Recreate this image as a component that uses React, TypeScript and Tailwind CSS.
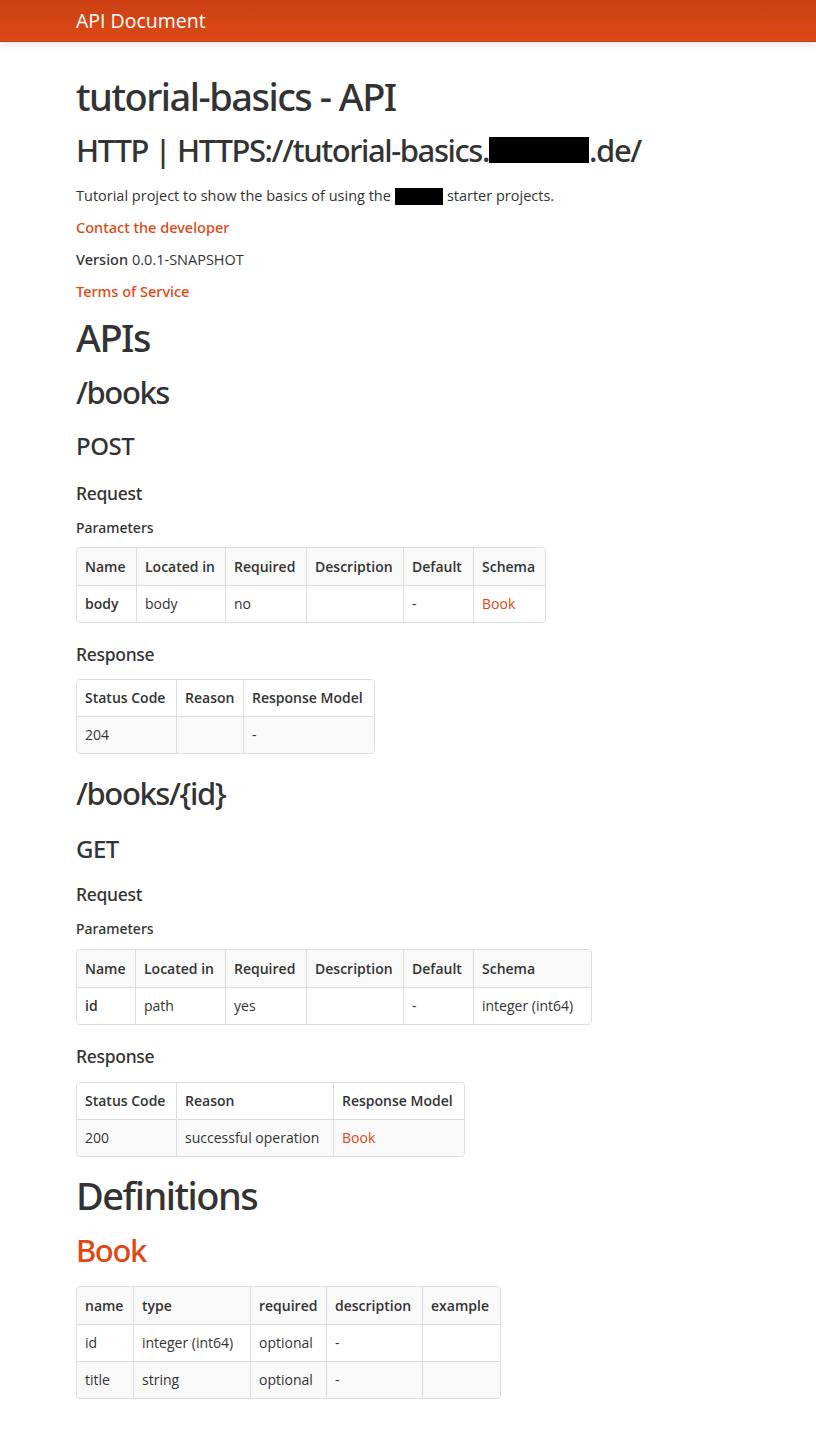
import React from 'react';

type Cell = { text: string; bold?: boolean; link?: boolean };

interface TableProps {
    widths: number[];
    head: string[];
    rows: Cell[][];
    // which rows (0 = head) get the grey background
    shaded: number[];
    rowH?: string;
}

function DocTable({ widths, head, rows, shaded, rowH = 'h-[37px]' }: TableProps) {
    const all: Cell[][] = [head.map((h) => ({ text: h, bold: true })), ...rows];
    return (
        <table className="border-separate border-spacing-0 border border-[#ddd] rounded-[4px] text-[14px] leading-[20px] text-[#333] table-fixed">
            <colgroup>
                {widths.map((w, i) => (
                    <col key={i} style={{ width: w }} />
                ))}
            </colgroup>
            <tbody>
                {all.map((row, r) => (
                    <tr key={r} className={shaded.includes(r) ? 'bg-[#f9f9f9]' : 'bg-white'}>
                        {row.map((c, i) => (
                            <td
                                key={i}
                                className={`px-2 py-2 ${rowH} whitespace-nowrap align-middle border-[#ddd] ${
                                    i > 0 ? 'border-l' : ''
                                } ${r > 0 ? 'border-t' : ''} ${c.bold ? 'font-semibold' : ''} ${
                                    c.link ? 'text-[#dd4814]' : ''
                                } ${r === 0 && i === 0 ? 'rounded-tl-[4px]' : ''} ${
                                    r === 0 && i === row.length - 1 ? 'rounded-tr-[4px]' : ''
                                } ${r === all.length - 1 && i === 0 ? 'rounded-bl-[4px]' : ''} ${
                                    r === all.length - 1 && i === row.length - 1 ? 'rounded-br-[4px]' : ''
                                }`}
                            >
                                {c.text}
                            </td>
                        ))}
                    </tr>
                ))}
            </tbody>
        </table>
    );
}

const head = "font-['Noto_Sans',sans-serif] font-medium";
const h1 = `${head} text-[38px] leading-[40px] tracking-[-1.5px]`;
const h2 = `${head} text-[31px] leading-[40px] tracking-[-1.4px]`;
const h3 = `${head} text-[24px] leading-[40px] tracking-[-0.5px]`;
const h4 = `${head} text-[17.5px] leading-[20px] tracking-[-0.3px]`;
const h5 = `${head} text-[14px] leading-[20px]`;
const para = 'h-[20px] text-[14.5px] leading-[20px] flex';

export default function App() {
    return (
        <div className="min-h-[1431px] bg-white text-[#333] font-['Open_Sans',sans-serif]">
            {/* Navbar */}
            <div className="h-[42px] bg-gradient-to-b from-[#cc4114] to-[#dd4814] border-b border-[#bf3e11] shadow-[0_2px_8px_rgba(0,0,0,0.12)] flex items-center px-[76px]">
                <span className="text-white text-[19.5px] leading-[20px]">API Document</span>
            </div>

            <div className="px-[76px] pb-[30px]">
                <h1 className={`mt-[34px] ${h1}`}>tutorial-basics - API</h1>
                <h2 className={`mt-[14px] ${h2} flex items-center`}>
                    HTTP | HTTPS://tutorial-basics.
                    <span className="inline-block w-[100px] h-[26px] bg-black" />
                    .de/
                </h2>
                <p className={`mt-[16px] ${para} items-center`}>
                    Tutorial project to show the basics of using the
                    <span className="inline-block w-[48px] h-[17px] bg-black mx-[4px]" />
                    starter projects.
                </p>
                <p className={`mt-[11px] ${para} items-center`}>
                    <a className={`text-[#dd4814] ${head}`}>Contact the developer</a>
                </p>
                <p className={`mt-[12px] ${para} items-baseline gap-[4px]`}>
                    <b className={head}>Version</b> 0.0.1-SNAPSHOT
                </p>
                <p className={`mt-[12px] ${para} items-center`}>
                    <a className={`text-[#dd4814] ${head}`}>Terms of Service</a>
                </p>

                <h1 className={`mt-[16px] ${h1}`}>APIs</h1>

                {/* /books */}
                <h2 className={`mt-[15px] ${h2}`}>/books</h2>
                <h3 className={`mt-[14px] ${h3}`}>POST</h3>
                <h4 className={`mt-[17px] ${h4}`}>Request</h4>
                <h5 className={`mt-[15px] ${h5}`}>Parameters</h5>
                <div className="mt-[9px]">
                    <DocTable
                        widths={[59, 89, 81, 97, 70, 72]}
                        head={['Name', 'Located in', 'Required', 'Description', 'Default', 'Schema']}
                        rows={[
                            [
                                { text: 'body', bold: true },
                                { text: 'body' },
                                { text: 'no' },
                                { text: '' },
                                { text: '-' },
                                { text: 'Book', link: true },
                            ],
                        ]}
                        shaded={[0]}
                    />
                </div>
                <h4 className={`mt-[21px] ${h4}`}>Response</h4>
                <div className="mt-[15px]">
                    <DocTable
                        widths={[99, 67, 131]}
                        head={['Status Code', 'Reason', 'Response Model']}
                        rows={[[{ text: '204' }, { text: '' }, { text: '-' }]]}
                        shaded={[1]}
                        rowH="h-[36px]"
                    />
                </div>

                {/* /books/{id} */}
                <h2 className={`mt-[19px] ${h2}`}>/books/{'{id}'}</h2>
                <h3 className={`mt-[16px] ${h3}`}>GET</h3>
                <h4 className={`mt-[15px] ${h4}`}>Request</h4>
                <h5 className={`mt-[15px] ${h5}`}>Parameters</h5>
                <div className="mt-[10px]">
                    <DocTable
                        widths={[58, 90, 81, 97, 70, 118]}
                        head={['Name', 'Located in', 'Required', 'Description', 'Default', 'Schema']}
                        rows={[
                            [
                                { text: 'id', bold: true },
                                { text: 'path' },
                                { text: 'yes' },
                                { text: '' },
                                { text: '-' },
                                { text: 'integer (int64)' },
                            ],
                        ]}
                        shaded={[0]}
                    />
                </div>
                <h4 className={`mt-[21px] ${h4}`}>Response</h4>
                <div className="mt-[16px]">
                    <DocTable
                        widths={[99, 157, 131]}
                        head={['Status Code', 'Reason', 'Response Model']}
                        rows={[[{ text: '200' }, { text: 'successful operation' }, { text: 'Book', link: true }]]}
                        shaded={[1]}
                        rowH="h-[36px]"
                    />
                </div>

                {/* Definitions */}
                <h1 className={`mt-[18px] ${h1}`}>Definitions</h1>
                <h2 className={`mt-[15px] ${h2} text-[#dd4814]`}>Book</h2>
                <div className="mt-[16px]">
                    <DocTable
                        widths={[56, 117, 76, 96, 78]}
                        head={['name', 'type', 'required', 'description', 'example']}
                        rows={[
                            [{ text: 'id' }, { text: 'integer (int64)' }, { text: 'optional' }, { text: '-' }, { text: '' }],
                            [{ text: 'title' }, { text: 'string' }, { text: 'optional' }, { text: '-' }, { text: '' }],
                        ]}
                        shaded={[0, 2]}
                    />
                </div>
            </div>
        </div>
    );
}
